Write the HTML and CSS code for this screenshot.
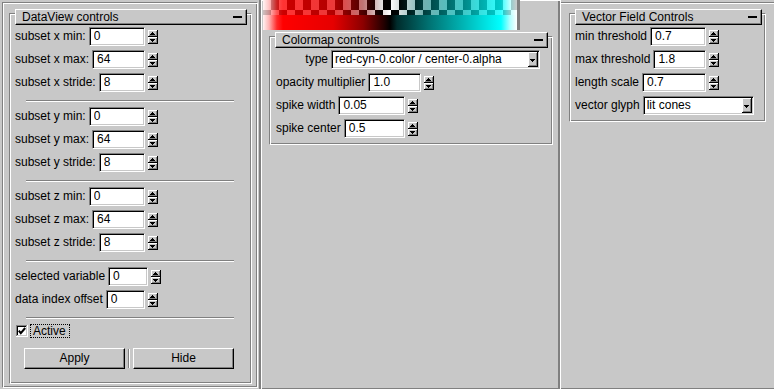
FILE: index.html
```html
<!DOCTYPE html>
<html lang="en">
<head>
<meta charset="utf-8">
<title>DataView controls</title>
<link rel="stylesheet" href="styles.css">
</head>
<body>
<svg class="defs" aria-hidden="true" focusable="false">
  <symbol id="spin" viewBox="0 0 10 14">
    <rect width="10" height="14" fill="#c8c8c8"/>
    <path d="M0 .5H9M.5 0V6" stroke="#fff"/>
    <path d="M1 5.5H9M8.5 1V6" stroke="#808080"/>
    <path d="M0 6.5H10M9.5 0V7" stroke="#000"/>
    <path d="M0 7.5H9M.5 7V13" stroke="#fff"/>
    <path d="M1 12.5H9M8.5 8V13" stroke="#808080"/>
    <path d="M0 13.5H10M9.5 7V14" stroke="#000"/>
    <path d="M4 2h1v1h-1zM3 3h3v1h-3zM2 4h5v1h-5z" fill="#000"/>
    <path d="M2 9h5v1h-5zM3 10h3v1h-3zM4 11h1v1h-1z" fill="#000"/>
  </symbol>
  <symbol id="drop" viewBox="0 0 10 15">
    <rect width="10" height="15" fill="#c8c8c8"/>
    <path d="M0 .5H9M.5 0V14" stroke="#fff"/>
    <path d="M1 13.5H9M8.5 1V14" stroke="#808080"/>
    <path d="M0 14.5H10M9.5 0V15" stroke="#000"/>
    <path d="M2 7h5v1h-5zM3 8h3v1h-3zM4 9h1v1h-1z" fill="#000"/>
  </symbol>
</svg>

<div class="app">
  <div class="col-left">
    <div class="panel">
      <section class="rollout rollout-data">
        <div class="rollout-title"><span>DataView controls</span><i class="collapse"></i></div>
        <div class="rollout-body">
          <div class="row w-l"><label>subset x min:</label><input class="field" value="0" readonly><svg class="spin"><use href="#spin"/></svg></div>
          <div class="row w-l"><label>subset x max:</label><input class="field" value="64" readonly><svg class="spin"><use href="#spin"/></svg></div>
          <div class="row w-l"><label>subset x stride:</label><input class="field" value="8" readonly><svg class="spin"><use href="#spin"/></svg></div>
          <div class="sep"></div>
          <div class="row w-l"><label>subset y min:</label><input class="field" value="0" readonly><svg class="spin"><use href="#spin"/></svg></div>
          <div class="row w-l"><label>subset y max:</label><input class="field" value="64" readonly><svg class="spin"><use href="#spin"/></svg></div>
          <div class="row w-l"><label>subset y stride:</label><input class="field" value="8" readonly><svg class="spin"><use href="#spin"/></svg></div>
          <div class="sep"></div>
          <div class="row w-l"><label>subset z min:</label><input class="field" value="0" readonly><svg class="spin"><use href="#spin"/></svg></div>
          <div class="row w-l"><label>subset z max:</label><input class="field" value="64" readonly><svg class="spin"><use href="#spin"/></svg></div>
          <div class="row w-l"><label>subset z stride:</label><input class="field" value="8" readonly><svg class="spin"><use href="#spin"/></svg></div>
          <div class="sep"></div>
          <div class="row w-lw"><label>selected variable</label><input class="field" value="0" readonly><svg class="spin"><use href="#spin"/></svg></div>
          <div class="row w-l"><label>data index offset</label><input class="field" value="0" readonly><svg class="spin"><use href="#spin"/></svg></div>
          <div class="sep"></div>
          <div class="check-row">
            <svg class="check" viewBox="0 0 12 12">
              <rect width="12" height="12" fill="#fff"/>
              <path d="M0 .5H11M.5 0V11" stroke="#808080"/>
              <path d="M1 1.5H10M1.5 1V10" stroke="#000"/>
              <path d="M1 10.5H11M10.5 1V11" stroke="#c8c8c8"/>
              <path d="M0 11.5H12M11.5 0V12" stroke="#fff"/>
              <path d="M2.8 5.6L4.8 8.2L9.2 3" fill="none" stroke="#000" stroke-width="2"/>
            </svg>
            <span class="focus">Active</span>
          </div>
          <div class="btn-row">
            <button class="btn" type="button">Apply</button>
            <span class="vsep"></span>
            <button class="btn" type="button">Hide</button>
          </div>
        </div>
      </section>
    </div>
  </div>

  <div class="col-mid">
    <div class="colormap">
      <div class="cm-a"></div>
      <div class="cm-b"></div>
      <div class="cm-solid"></div>
    </div>
    <section class="rollout rollout-cmap">
      <div class="rollout-title"><span>Colormap controls</span><i class="collapse"></i></div>
      <div class="rollout-body">
        <div class="row w-type"><label class="lbl-type">type</label><div class="dropdown"><span>red-cyn-0.color / center-0.alpha</span><svg class="drop"><use href="#drop"/></svg></div></div>
        <div class="row w-op"><label>opacity multiplier</label><input class="field" value="1.0" readonly><svg class="spin"><use href="#spin"/></svg></div>
        <div class="row w-sp"><label>spike width</label><input class="field" value="0.05" readonly><svg class="spin"><use href="#spin"/></svg></div>
        <div class="row w-sp"><label>spike center</label><input class="field" value="0.5" readonly><svg class="spin"><use href="#spin"/></svg></div>
      </div>
    </section>
  </div>

  <div class="col-right">
    <div class="panel-top">
      <section class="rollout rollout-vec">
        <div class="rollout-title"><span>Vector Field Controls</span><i class="collapse"></i></div>
        <div class="rollout-body">
          <div class="row w-r"><label>min threshold</label><input class="field" value="0.7" readonly><svg class="spin"><use href="#spin"/></svg></div>
          <div class="row w-r"><label>max threshold</label><input class="field" value="1.8" readonly><svg class="spin"><use href="#spin"/></svg></div>
          <div class="row w-r"><label>length scale</label><input class="field" value="0.7" readonly><svg class="spin"><use href="#spin"/></svg></div>
          <div class="row w-rdd"><label>vector glyph</label><div class="dropdown"><span>lit cones</span><svg class="drop"><use href="#drop"/></svg></div></div>
        </div>
      </section>
    </div>
  </div>
</div>
</body>
</html>
```

FILE: styles.css
```css
html, body {
  margin: 0;
  padding: 0;
  background: #c8c8c8;
  overflow: hidden;
}

body {
  font: 12px "Liberation Sans", Arial, sans-serif;
  color: #000;
}

.defs {
  display: block;
  width: 0;
  height: 0;
  overflow: hidden;
}

.app {
  display: flex;
  width: 774px;
  height: 389px;
}

/* ---------- columns ---------- */
.col-left {
  width: 258px;
  height: 389px;
  box-sizing: border-box;
  padding: 2px 0 1px 2px;
  display: flex;
  flex: none;
}

.panel {
  flex: 1;
  display: flex;
  flex-direction: column;
  box-sizing: border-box;
  border: 1px solid;
  border-color: #808080 #fff #fff #808080;
  box-shadow: inset 1px 1px 0 #fff, inset -1px -1px 0 #808080;
  padding: 10px 5px 3px 6px;
}

.col-mid {
  width: 302px;
  height: 389px;
  margin-left: 1px;
  flex: none;
  box-sizing: border-box;
  border-left: 2px solid #808080;
  border-right: 1px solid #fff;
  box-shadow: inset 1px 1px 0 #fff, inset -2px -1px 0 #808080;
}

.col-right {
  flex: 1;
  height: 389px;
  box-sizing: border-box;
  padding-top: 2px;
  display: flex;
  flex-direction: column;
  box-shadow: inset 0 -1px 0 #808080;
}

.panel-top {
  flex: 1;
  border-top: 1px solid #808080;
  box-shadow: inset 0 1px 0 #fff;
  padding: 10px 0 0 8px;
}

/* ---------- colormap strip ---------- */
.colormap {
  --cm-over: linear-gradient(to right,
    rgba(255,242,242,.8) 0px, rgba(255,180,180,.8) 6px, rgba(255,40,40,.8) 14px,
    rgba(255,0,0,.8) 20px, rgba(230,0,0,.78) 70px, rgba(140,0,0,.55) 100px,
    rgba(40,0,0,.15) 118px, rgba(0,0,0,0) 127px, rgba(0,44,44,.15) 136px,
    rgba(0,112,112,.55) 160px, rgba(0,180,180,.75) 200px, rgba(0,230,230,.8) 225px,
    rgba(0,255,255,.8) 238px, rgba(176,255,255,.8) 247px, rgba(255,255,255,.8) 254px);
  width: 254px;
  height: 30px;
  margin-left: 2px;
  border-right: 3px solid #808080;
  display: flex;
  flex-direction: column;
}

.cm-a {
  height: 10px;
  background: var(--cm-over), repeating-linear-gradient(90deg, #fff 0 8px, #000 8px 16px);
}

.cm-b {
  height: 5px;
  background: var(--cm-over), repeating-linear-gradient(90deg, #000 0 8px, #fff 8px 16px);
}

.cm-solid {
  height: 15px;
  background: linear-gradient(to right,
    #fff2f2 0px, #ffb4b4 6px, #ff2828 14px, #ff0000 20px, #e60000 70px,
    #8c0000 100px, #280000 120px, #000 127px, #002c2c 134px, #007070 165px,
    #00b4b4 200px, #00e6e6 225px, #00ffff 238px, #b0ffff 247px, #fff 254px);
}

/* ---------- rollouts ---------- */
.rollout {
  box-sizing: border-box;
  border: 1px solid;
  border-color: #808080 #fff #fff #808080;
  box-shadow: inset 1px 1px 0 #fff, inset -1px -1px 0 #808080;
  display: flex;
  flex-direction: column;
  padding: 0 4px 2px 5px;
}

.rollout-data {
  flex: 1;
}

.rollout-cmap {
  width: 284px;
  margin: 6px 0 0 8px;
}

.rollout-vec {
  width: 197px;
  padding-right: 3px;
}

.rollout-title {
  flex: none;
  margin-top: -5px;
  height: 16px;
  box-sizing: border-box;
  border: 1px solid;
  border-color: #fff #000 #000 #fff;
  box-shadow: inset -1px -1px 0 #808080;
  background: #c8c8c8;
  display: flex;
  align-items: center;
  justify-content: space-between;
  padding: 0 4px 0 6px;
  line-height: 14px;
  white-space: nowrap;
}

.collapse {
  display: block;
  width: 9px;
  height: 2px;
  background: #000;
}

.rollout-body {
  margin-top: 2px;
}

.rollout-cmap .rollout-body {
  padding-left: 1px;
}

/* ---------- rows ---------- */
.row {
  display: flex;
  align-items: flex-start;
  height: 19px;
  line-height: 19px;
  margin-bottom: 4px;
  white-space: nowrap;
}

.row label {
  margin-right: 3px;
  flex: none;
}

.w-l { width: 143px; }
.w-lw { width: 146px; }
.w-op { width: 158px; }
.w-sp { width: 142px; }
.w-r { width: 144px; }
.w-rdd { width: 179px; }
.w-type { width: 264px; }

.lbl-type {
  width: 52px;
  text-align: right;
}

.field {
  flex: 1 1 0;
  min-width: 0;
  height: 19px;
  margin: 0;
  box-sizing: border-box;
  border: 1px solid;
  border-color: #808080 #fff #fff #808080;
  box-shadow: inset 1px 1px 0 #000, inset -1px -1px 0 #c8c8c8;
  background: #fff;
  padding: 0 0 0 4px;
  font: inherit;
  color: #000;
  outline: none;
}

.spin {
  flex: none;
  width: 10px;
  height: 14px;
  margin: 3px 0 0 3px;
}

.dropdown {
  flex: 1 1 0;
  min-width: 0;
  height: 19px;
  box-sizing: border-box;
  border: 1px solid;
  border-color: #808080 #fff #fff #808080;
  box-shadow: inset 1px 1px 0 #000, inset -1px -1px 0 #c8c8c8;
  background: #fff;
  display: flex;
  align-items: center;
  justify-content: space-between;
  padding: 0 1px 0 3px;
  line-height: 17px;
  overflow: hidden;
}

.dropdown span {
  overflow: hidden;
}

.drop {
  flex: none;
  width: 10px;
  height: 15px;
}

/* margin-top 8 collapses with the preceding row's 4px margin */
.sep {
  width: 208px;
  height: 0;
  border-top: 1px solid #808080;
  border-bottom: 1px solid #fff;
  margin: 8px 0 5px 11px;
}

/* ---------- checkbox + buttons ---------- */
.check-row {
  display: flex;
  align-items: center;
  height: 14px;
  padding-left: 1px;
}

.check {
  width: 12px;
  height: 12px;
  margin-right: 2px;
  flex: none;
}

.focus {
  box-sizing: border-box;
  height: 14px;
  line-height: 12px;
  border: 1px dotted #000;
  padding: 0 3px 0 2px;
}

.btn-row {
  display: flex;
  align-items: center;
  margin: 10px 0 0 9px;
}

.btn {
  width: 101px;
  height: 21px;
  margin: 0;
  padding: 0;
  box-sizing: border-box;
  border: 1px solid;
  border-color: #fff #000 #000 #fff;
  box-shadow: inset -1px -1px 0 #808080;
  background: #c8c8c8;
  font: inherit;
  color: #000;
  line-height: 19px;
  text-align: center;
}

.vsep {
  width: 0;
  height: 19px;
  border-left: 1px solid #808080;
  border-right: 1px solid #fff;
  margin: 0 3px;
}
```
